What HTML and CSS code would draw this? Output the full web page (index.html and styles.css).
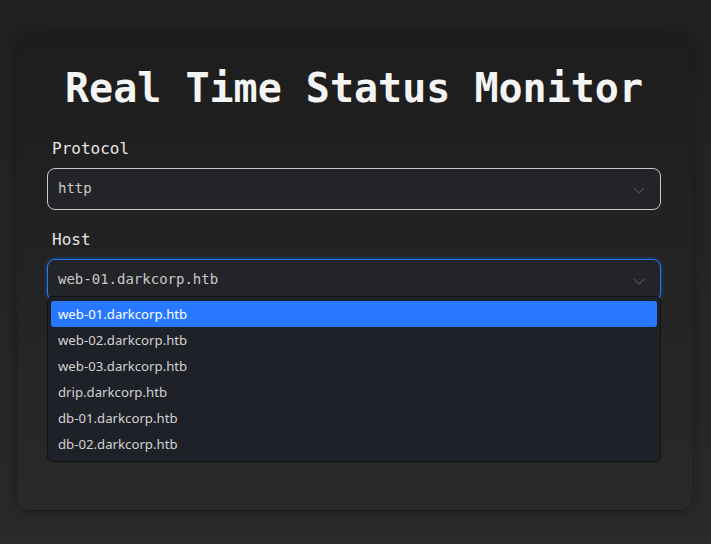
FILE: index.html
```html
<!DOCTYPE html>
<html lang="en">
<head>
<meta charset="utf-8">
<title>Real Time Status Monitor</title>
<link rel="stylesheet" href="styles.css">
</head>
<body>
<main class="card">
  <h1 class="title">Real Time Status Monitor</h1>
  <div class="field">
    <label class="label">Protocol</label>
    <div class="select">
      <span class="select-value">http</span>
      <svg class="chev" width="12" height="7" viewBox="0 0 12 7"><polyline points="1,1 6,6 11,1" fill="none" stroke="#4a4c50" stroke-width="1.3"/></svg>
    </div>
  </div>
  <div class="field host">
    <label class="label">Host</label>
    <div class="select-wrap">
      <div class="select focused">
        <span class="select-value">web-01.darkcorp.htb</span>
        <svg class="chev" width="12" height="7" viewBox="0 0 12 7"><polyline points="1,1 6,6 11,1" fill="none" stroke="#4a4c50" stroke-width="1.3"/></svg>
      </div>
      <ul class="menu">
        <li class="opt active">web-01.darkcorp.htb</li>
        <li class="opt">web-02.darkcorp.htb</li>
        <li class="opt">web-03.darkcorp.htb</li>
        <li class="opt">drip.darkcorp.htb</li>
        <li class="opt">db-01.darkcorp.htb</li>
        <li class="opt">db-02.darkcorp.htb</li>
      </ul>
    </div>
  </div>
</main>
</body>
</html>
```
FILE: styles.css
```css
html, body {
  margin: 0;
  padding: 0;
}
body {
  min-height: 544px;
  background: linear-gradient(#212121, #2a2a2a);
  font-family: "DejaVu Sans Mono", monospace;
  padding: 34px 19px 0 17px;
  box-sizing: border-box;
}
.card {
  height: 477px;
  box-sizing: border-box;
  padding: 30px 31px 0 30px;
  border-radius: 13px;
  background: linear-gradient(#1d1d1d, #292929);
  border-bottom: 1px solid #1a1a1a;
  box-shadow: 0 0 18px rgba(0,0,0,0.35);
}
.title {
  margin: 0;
  font-size: 40px;
  line-height: 48px;
  font-weight: bold;
  text-align: center;
  color: #f4f4f4;
  letter-spacing: 0;
}
.field {
  margin-top: 27px;
}
.field.host {
  margin-top: 20px;
}
.label {
  display: block;
  font-size: 16px;
  line-height: 20px;
  color: #e6e6e6;
  padding-left: 5px;
  margin-bottom: 9px;
}
.select-wrap {
  position: relative;
}
.select {
  height: 42px;
  box-sizing: border-box;
  border: 1px solid #c9c9c9;
  border-radius: 8px;
  background: #232427;
  display: flex;
  align-items: center;
  justify-content: space-between;
  padding: 0 15px 0 10px;
}
.select.focused {
  border-color: #1f7aff;
  box-shadow: 0 0 4px rgba(31,122,255,0.55);
}
.select-value {
  font-size: 14px;
  color: #c9c9c9;
  margin-top: -2px;
}
.chev {
  display: block;
  margin-top: 2px;
}
.menu {
  position: absolute;
  left: 0;
  right: 0;
  top: 37px;
  margin: 0;
  padding: 4px 3px;
  list-style: none;
  background: #1f2129;
  border: 1px solid #111214;
  border-radius: 6px;
  font-family: "Noto Sans", "Open Sans", sans-serif;
  font-size: 13.2px;
}
.opt {
  height: 26px;
  line-height: 26px;
  padding-left: 7px;
  color: #d2d2d2;
  border-radius: 3px;
}
.opt.active {
  background: #2878ff;
  color: #ffffff;
}
```
